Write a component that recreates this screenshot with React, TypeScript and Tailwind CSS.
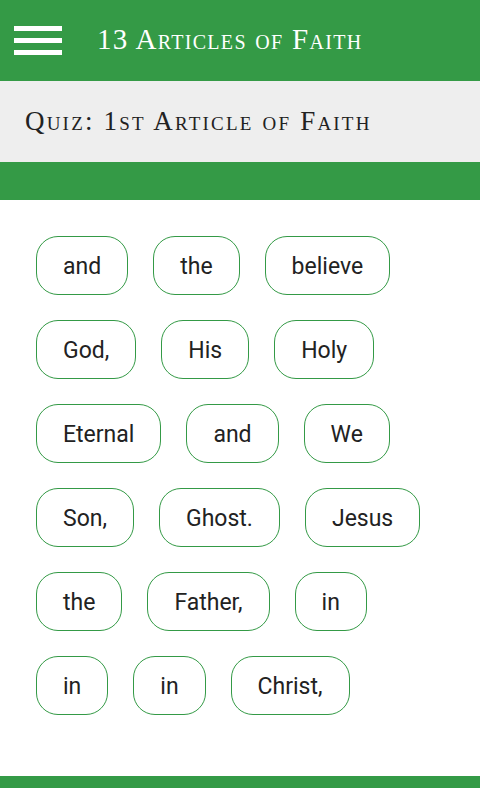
const WORDS = [
  ["and", "the", "believe"],
  ["God,", "His", "Holy"],
  ["Eternal", "and", "We"],
  ["Son,", "Ghost.", "Jesus"],
  ["the", "Father,", "in"],
  ["in", "in", "Christ,"],
];

const serif = { fontFamily: '"Liberation Serif", "DejaVu Serif", serif' };

export default function App() {
  return (
    <div className="w-[480px] h-[800px] bg-white flex flex-col overflow-hidden">
      {/* App bar */}
      <div className="h-[81px] bg-[#349a46] flex items-center shrink-0">
        <div className="ml-[14px] w-[48px] flex flex-col gap-[7px]">
          <div className="h-[5px] bg-white" />
          <div className="h-[5px] bg-white" />
          <div className="h-[5px] bg-white" />
        </div>
        <h1
          className="ml-[35px] text-white text-[29px] tracking-[1.3px] [font-variant:small-caps] leading-none pb-[2px]"
          style={serif}
        >
          13 Articles of Faith
        </h1>
      </div>

      {/* Quiz title */}
      <div className="h-[81px] bg-[#eeeeee] flex items-center shrink-0">
        <h2
          className="ml-[25px] text-[#222] text-[27px] tracking-[2.2px] [font-variant:small-caps] leading-none"
          style={serif}
        >
          Quiz: 1st Article of Faith
        </h2>
      </div>

      <div className="h-[38px] bg-[#349a46] shrink-0" />

      {/* Word chips */}
      <div className="flex-1 pt-[36px] px-[36px] flex flex-col gap-[25px]">
        {WORDS.map((row, i) => (
          <div key={i} className="flex gap-[25px]">
            {row.map((w, j) => (
              <button
                key={j}
                className="h-[59px] px-[26px] pt-[3px] rounded-[22px] border border-[#349a46] bg-white text-[#222] text-[23px] flex items-center justify-center"
                style={{ fontFamily: 'Roboto, "Noto Sans", sans-serif' }}
              >
                {w}
              </button>
            ))}
          </div>
        ))}
      </div>

      <div className="h-[12px] bg-[#349a46] shrink-0" />
      <div className="h-[12px] bg-white shrink-0" />
    </div>
  );
}
